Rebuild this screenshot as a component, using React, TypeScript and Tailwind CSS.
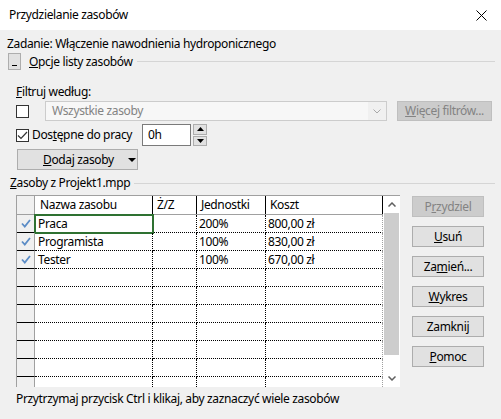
import React from 'react';

const FONT = { fontFamily: '"Segoe UI", "Noto Sans", Arial, sans-serif' };

type Row = { name: string; zz: string; units: string; cost: string; checked: boolean };

const ROWS: Row[] = [
  { name: 'Praca', zz: '', units: '200%', cost: '800,00 zł', checked: true },
  { name: 'Programista', zz: '', units: '100%', cost: '830,00 zł', checked: true },
  { name: 'Tester', zz: '', units: '100%', cost: '670,00 zł', checked: true },
  ...Array.from({ length: 7 }, () => ({ name: '', zz: '', units: '', cost: '', checked: false })),
];

function Check() {
  return (
    <svg width="10" height="9" viewBox="0 0 10 9">
      <path d="M1 4.5 L3.8 7.5 L9 1" fill="none" stroke="#5b8cc6" strokeWidth="1.8" />
    </svg>
  );
}

function Btn({ children, disabled }: { children: React.ReactNode; disabled?: boolean }) {
  return (
    <div
      className={
        'h-[21px] w-[72px] flex items-center justify-center border whitespace-nowrap ' +
        (disabled ? 'bg-[#cccccc] border-[#bfbfbf] text-[#838383]' : 'bg-[#e1e1e1] border-[#adadad] text-black')
      }
    >
      {children}
    </div>
  );
}

function GroupLabel({ children }: { children: React.ReactNode }) {
  return (
    <div className="flex items-center flex-1 gap-[4px]">
      <span className="whitespace-nowrap">{children}</span>
      <div className="flex-1 h-px bg-[#d5d5d5] mr-[6px]" />
    </div>
  );
}

export default function App() {
  return (
    <div
      style={FONT}
      className="w-[501px] h-[419px] bg-[#f0f0f0] text-[12px] tracking-[-0.35px] text-black overflow-hidden leading-none"
    >
      {/* Title bar */}
      <div className="h-[30px] bg-white flex items-center justify-between pl-[9px] pr-[14px]">
        <span>Przydzielanie zasobów</span>
        <svg width="11" height="11" viewBox="0 0 11 11">
          <path d="M0.5 0.5 L10.5 10.5 M10.5 0.5 L0.5 10.5" stroke="#000" strokeWidth="1" />
        </svg>
      </div>

      <div className="pl-[7px]">
        <div className="h-[16px] mt-[6px] flex items-center">Zadanie: Włączenie nawodnienia hydroponicznego</div>

        <div className="h-[17px] mt-[1px] flex items-center">
          <div className="w-[13px] h-[17px] ml-[1px] shrink-0 bg-[#e1e1e1] border border-[#adadad] flex items-end justify-center pb-[3px]">
            <div className="w-[5px] h-px bg-black" />
          </div>
          <div className="ml-[8px] flex-1 flex">
            <GroupLabel>
              <span className="underline">O</span>pcje listy zasobów
            </GroupLabel>
          </div>
        </div>

        <div className="pl-[9px]">
          <div className="h-[16px] mt-[14px] flex items-center">
            <span className="underline">F</span>iltruj według:
          </div>

          <div className="h-[20px] mt-[1px] flex items-center">
            <div className="w-[13px] h-[13px] shrink-0 border border-[#333] bg-white" />
            <div className="ml-[16px] w-[342px] h-[20px] shrink-0 border border-[#cccccc] bg-[#f0f0f0] flex items-center">
              <div className="flex-1 h-full bg-[#f7f7f7] flex items-center pl-[6px] text-[#838383]">Wszystkie zasoby</div>
              <div className="w-[18px] flex items-center justify-center">
                <svg width="8" height="5" viewBox="0 0 8 5">
                  <path d="M0.5 0.5 L4 4 L7.5 0.5" fill="none" stroke="#a8a8a8" strokeWidth="1" />
                </svg>
              </div>
            </div>
            <div className="ml-[10px] w-[95px] h-[20px] shrink-0 bg-[#cccccc] border border-[#bfbfbf] text-[#838383] flex items-center justify-center whitespace-nowrap">
              <span className="underline">W</span>ięcej filtrów...
            </div>
          </div>

          <div className="h-[22px] mt-[3px] flex items-center">
            <div className="w-[13px] h-[13px] shrink-0 border border-[#333] bg-white flex items-center justify-center">
              <svg width="11" height="9" viewBox="0 0 11 9">
                <path d="M1 4.5 L4 7.5 L10 1" fill="none" stroke="#333" strokeWidth="1.2" />
              </svg>
            </div>
            <span className="ml-[3px] w-[110px] shrink-0 whitespace-nowrap">
              Dos<span className="underline">t</span>ępne do pracy
            </span>
            <div className="w-[49px] h-[22px] shrink-0 bg-white border border-[#7a7a7a] flex items-center pl-[5px]">0h</div>
            <div className="ml-[2px] w-[14px] h-[22px] shrink-0 flex flex-col gap-px">
              <div className="flex-1 bg-[#e1e1e1] border border-[#adadad] flex items-center justify-center">
                <svg width="7" height="4" viewBox="0 0 7 4"><path d="M0 4 L3.5 0 L7 4 Z" fill="#000" /></svg>
              </div>
              <div className="flex-1 bg-[#e1e1e1] border border-[#adadad] flex items-center justify-center">
                <svg width="7" height="4" viewBox="0 0 7 4"><path d="M0 0 L3.5 4 L7 0 Z" fill="#000" /></svg>
              </div>
            </div>
          </div>

          <div className="h-[21px] mt-[3px] w-[121px] ml-[1px] bg-[#e1e1e1] border border-[#adadad] flex items-center whitespace-nowrap">
            <span className="ml-[25px]">
              <span className="underline">D</span>odaj zasoby
            </span>
            <svg className="ml-[14px]" width="8" height="4" viewBox="0 0 8 4"><path d="M0 0 L4 4 L8 0 Z" fill="#000" /></svg>
          </div>
        </div>

        <div className="h-[16px] mt-[5px] flex items-center pl-[3px]">
          <GroupLabel>
            <span className="underline">Z</span>asoby z Projekt1.mpp
          </GroupLabel>
        </div>

        <div className="flex mt-[4px] pl-[9px]">
          {/* Table */}
          <div className="w-[384px] h-[192px] shrink-0 border-l border-t border-[#a0a0a0] flex bg-white overflow-hidden">
            <div className="w-[366px] shrink-0 flex flex-col overflow-hidden">
              <div className="h-[18px] flex shrink-0 border-b border-[#a0a0a0] box-content">
                <div className="w-[18px] bg-[#f0f0f0] border-r border-[#a0a0a0]" />
                <div className="w-[118px] border-r border-black flex items-center pl-[5px]">Nazwa zasobu</div>
                <div className="w-[44px] border-r border-black flex items-center pl-[4px]">Ż/Z</div>
                <div className="w-[69px] border-r border-black flex items-center pl-[4px]">Jednostki</div>
                <div className="w-[117px] border-r border-black flex items-center pl-[4px]">Koszt</div>
              </div>
              {ROWS.map((r, i) => (
                <div key={i} className="h-[18px] flex shrink-0 relative">
                  <div className="w-[18px] bg-[#f0f0f0] border-r border-[#a0a0a0] border-b border-b-black flex items-center justify-center">
                    {r.checked && <Check />}
                  </div>
                  <div className="w-[118px] border-r border-b border-dotted border-black flex items-center pl-[3px]">{r.name}</div>
                  <div className="w-[44px] border-r border-b border-dotted border-black flex items-center pl-[3px]">{r.zz}</div>
                  <div className="w-[69px] border-r border-b border-dotted border-black flex items-center pl-[2px]">{r.units}</div>
                  <div className="w-[117px] border-r border-r-[#a0a0a0] border-b border-dotted border-black flex items-center pl-[2px]">{r.cost}</div>
                  {i === 0 && (
                    <div className="absolute left-[17px] top-[-1px] w-[120px] h-[20px] border-2 border-[#2e7131]" />
                  )}
                </div>
              ))}
            </div>
            {/* Scrollbar */}
            <div className="w-[17px] flex flex-col bg-white">
              <div className="h-[17px] flex items-center justify-center">
                <svg width="8" height="5" viewBox="0 0 8 5"><path d="M0.5 4.5 L4 1 L7.5 4.5" fill="none" stroke="#606060" strokeWidth="1.5" /></svg>
              </div>
              <div className="h-[142px] mx-px bg-[#cdcdcd]" />
              <div className="flex-1 flex items-end justify-center pb-[6px]">
                <svg width="8" height="5" viewBox="0 0 8 5"><path d="M0.5 0.5 L4 4 L7.5 0.5" fill="none" stroke="#606060" strokeWidth="1.5" /></svg>
              </div>
            </div>
          </div>

          {/* Buttons */}
          <div className="ml-[12px] mt-px flex flex-col gap-[9px]">
            <Btn disabled>
              P<span className="underline">r</span>zydziel
            </Btn>
            <Btn>
              <span className="underline">U</span>suń
            </Btn>
            <Btn>
              Za<span className="underline">m</span>ień...
            </Btn>
            <Btn>
              <span className="underline">W</span>ykres
            </Btn>
            <Btn>Zamknij</Btn>
            <Btn>
              <span className="underline">P</span>omoc
            </Btn>
          </div>
        </div>

        <div className="h-[16px] mt-[4px] pl-[9px] flex items-center">
          Przytrzymaj przycisk Ctrl i klikaj, aby zaznaczyć wiele zasobów
        </div>
      </div>
    </div>
  );
}
